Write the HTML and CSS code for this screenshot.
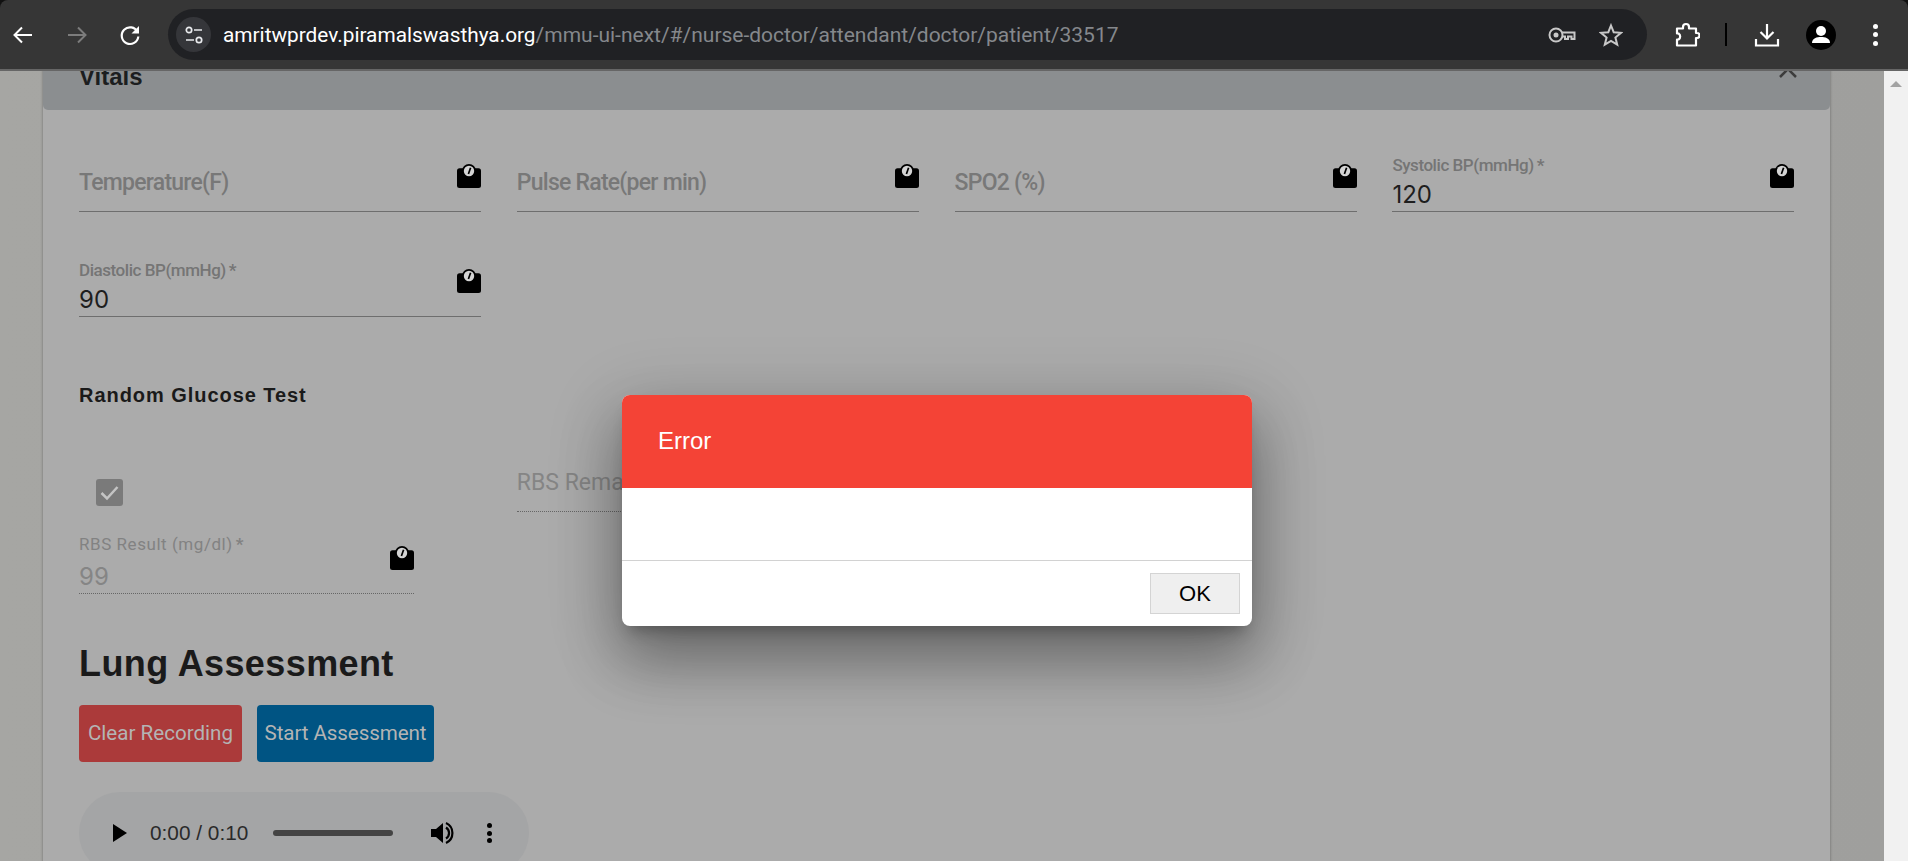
FILE: index.html
```html
<!doctype html>
<html lang="en">
<head>
  <meta charset="utf-8">
  <title>Vitals</title>
  <link rel="stylesheet" href="styles.css">
</head>

<body>

<svg class="defs" width="0" height="0">
  <symbol id="scale" viewBox="0 0 24 24">
    <circle cx="12" cy="7" r="7" fill="#000"/>
    <path d="M2.500 4.200H21.500Q24 4.200 24 6.700V21.500Q24 24 21.500 24H2.500Q0 24 0 21.500V6.700Q0 4.200 2.500 4.200Z" fill="#000"/>
    <circle cx="12" cy="7" r="5.200" fill="#d4d4d4"/>
    <path d="M13.600 3.800L11.400 10" stroke="#000" stroke-width="1.700"/>
  </symbol>
</svg>

<div id="toolbar">
  <div class="nav">
    <svg class="tool-icon" viewBox="0 0 30 30"><path d="M24 15H7M14 7.500L6.500 15L14 22.500" fill="none" stroke="#fff" stroke-width="2"/></svg>
    <svg class="tool-icon" viewBox="0 0 30 30"><path d="M6 15H23M16 7.500L23.500 15L16 22.500" fill="none" stroke="#7c7c7c" stroke-width="2"/></svg>
    <svg class="tool-icon" viewBox="0 0 30 30"><path d="M22.500 12A8.300 8.300 0 1 0 23.300 16.500" fill="none" stroke="#fff" stroke-width="2.200"/><path d="M24 6V13.500H16.500Z" fill="#fff"/></svg>
  </div>

  <div id="omnibox">
    <div class="site-icon">
      <svg width="20" height="20" viewBox="0 0 20 20"><g fill="none" stroke="#e8eaed" stroke-width="1.700"><circle cx="5" cy="5" r="2.700"/><circle cx="15" cy="15" r="2.700"/><path d="M10 5H18M2 15H10"/></g></svg>
    </div>
    <span class="url"><span class="host">amritwprdev.piramalswasthya.org</span>/mmu-ui-next/#/nurse-doctor/attendant/doctor/patient/33517</span>
    <svg class="key-icon" width="28" height="16" viewBox="0 0 28 16"><g fill="none" stroke="#c8c8c8" stroke-width="2"><circle cx="8" cy="8" r="6.500"/><path d="M14 5.500H26.500V12H23.500V9.500H20V12H17V9.500H14"/></g><circle cx="8" cy="8" r="2.500" fill="#c8c8c8"/></svg>
    <svg class="star-icon" width="24" height="24" viewBox="0 0 24 24"><path d="M12 2.500L14.700 9.200L22 9.800L16.400 14.500L18.200 21.600L12 17.800L5.800 21.600L7.600 14.500L2 9.800L9.300 9.200Z" fill="none" stroke="#c8c8c8" stroke-width="2"/></svg>
  </div>

  <svg class="ext-icon" width="26" height="26" viewBox="0 0 26 26"><path d="M3 6.500H9V5A3 3 0 0 1 15 5V6.500H22V11H23A2.500 2.500 0 0 1 23 16H22V23.500H3V17.500H4.500A3.500 3.500 0 0 0 4.500 11.500H3Z" fill="none" stroke="#fff" stroke-width="2.200" stroke-linejoin="round"/></svg>
  <div class="sep"></div>
  <svg class="dl-icon" width="26" height="26" viewBox="0 0 26 26"><path d="M13 2V16M6.500 10L13 16.500L19.500 10M2 17V23.500H24V17" fill="none" stroke="#fff" stroke-width="2.200"/></svg>
  <div class="avatar">
    <svg width="30" height="30" viewBox="0 0 30 30"><circle cx="15" cy="11" r="5" fill="#fff"/><path d="M6 23C6 18 11 17 15 17S24 18 24 23Z" fill="#fff"/></svg>
  </div>
  <div class="menu"><i></i><i></i><i></i></div>
</div>
<div id="toolbar-line"></div>

<div id="viewport">
  <div id="page">
    <div id="card">

      <div class="card-head">
        <h2>Vitals</h2>
        <svg class="chevron" width="20" height="12" viewBox="0 0 20 12"><path d="M2 11L10 3L18 11" fill="none" stroke="#3c3c3c" stroke-width="2.500"/></svg>
      </div>

      <div class="card-body">

        <div class="fields">
          <div class="field">
            <div class="field-text"><span class="placeholder">Temperature(F)</span></div>
            <svg class="scale"><use href="#scale"/></svg>
          </div>
          <div class="field">
            <div class="field-text"><span class="placeholder">Pulse Rate(per min)</span></div>
            <svg class="scale"><use href="#scale"/></svg>
          </div>
          <div class="field">
            <div class="field-text"><span class="placeholder">SPO2 (%)</span></div>
            <svg class="scale"><use href="#scale"/></svg>
          </div>
          <div class="field">
            <div class="field-text"><span class="float-label">Systolic BP(mmHg)<b>*</b></span><span class="value">120</span></div>
            <svg class="scale"><use href="#scale"/></svg>
          </div>
          <div class="field">
            <div class="field-text"><span class="float-label">Diastolic BP(mmHg)<b>*</b></span><span class="value">90</span></div>
            <svg class="scale"><use href="#scale"/></svg>
          </div>
        </div>

        <h3 class="glucose-title">Random Glucose Test</h3>

        <div class="fields rbs-row">
          <div class="check-cell">
            <div class="checkbox">
              <svg width="27" height="27" viewBox="0 0 27 27"><path d="M5.500 14L11 19.500L21.500 8" fill="none" stroke="#c4c4c4" stroke-width="2.500"/></svg>
            </div>
          </div>
          <div class="field disabled">
            <div class="field-text"><span class="placeholder">RBS Remarks</span></div>
          </div>
        </div>

        <div class="field disabled rbs-result">
          <div class="field-text"><span class="float-label">RBS Result (mg/dl)<b>*</b></span><span class="value">99</span></div>
          <svg class="scale"><use href="#scale"/></svg>
        </div>

        <h1 class="lung-title">Lung Assessment</h1>

        <div class="actions">
          <div class="btn btn-red">Clear Recording</div>
          <div class="btn btn-blue">Start Assessment</div>
        </div>

        <div class="audio">
          <svg class="audio-play" width="14" height="18" viewBox="0 0 14 18"><path d="M0 0L14 9L0 18Z" fill="#000"/></svg>
          <span class="audio-time">0:00 / 0:10</span>
          <div class="audio-track"></div>
          <svg class="audio-vol" width="24" height="24" viewBox="0 0 24 24"><path d="M0 8H5L12 2V22L5 16H0Z" fill="#000"/><path d="M15 6.500A6.500 6.500 0 0 1 15 17.500M15 2A11 11 0 0 1 15 22" fill="none" stroke="#000" stroke-width="2.200"/></svg>
          <div class="audio-menu"><i></i><i></i><i></i></div>
        </div>

      </div>
    </div>
  </div>

  <div id="scrollbar"><div class="arrow-up"></div></div>

  <div id="dialog">
    <div class="dialog-head">Error</div>
    <div class="dialog-body"></div>
    <div class="dialog-foot"><div class="ok-btn">OK</div></div>
  </div>
</div>

</body>
</html>
```

FILE: styles.css
```css
html {
  box-sizing: border-box;
}
*, *:before, *:after {
  box-sizing: inherit;
}

body {
  margin: 0;
  height: 861px;
  overflow: hidden;
  display: flex;
  flex-direction: column;
  background-color: #111;
  font-family: 'Roboto', sans-serif;
}

.defs {
  position: absolute;
}

/* browser bar */

#toolbar {
  height: 69px;
  flex: none;
  display: flex;
  align-items: center;
  background-color: #363636;
  border-radius: 8px 8px 0 0;
}

#toolbar-line {
  height: 2px;
  flex: none;
  background-color: #666;
}

.nav {
  display: flex;
  gap: 23.5px;
  padding-left: 8px;
}

.tool-icon {
  width: 30px;
  height: 30px;
  display: block;
}

#omnibox {
  width: 1479px;
  height: 51px;
  margin-left: 23px;
  padding-left: 8px;
  display: flex;
  align-items: center;
  background-color: #202124;
  border-radius: 26px;
}

.site-icon {
  width: 35px;
  height: 35px;
  flex: none;
  display: flex;
  align-items: center;
  justify-content: center;
  background-color: #35363a;
  border-radius: 50%;
}

.url {
  margin-left: 12px;
  font-size: 21px;
  color: #85888c;
  white-space: nowrap;
}

.host {
  font-size: 20.8px;
  color: #fff;
}

.key-icon {
  margin-left: auto;
  flex: none;
}

.star-icon {
  margin-left: 23px;
  margin-right: 24px;
  flex: none;
}

.ext-icon {
  margin-left: 27px;
  flex: none;
}

.sep {
  width: 2px;
  height: 23px;
  margin-left: 25px;
  background-color: #000;
}

.dl-icon {
  margin-left: 27px;
  flex: none;
}

.avatar {
  width: 30px;
  height: 30px;
  margin-left: 26px;
  background-color: #000;
  border-radius: 50%;
  overflow: hidden;
}

.avatar svg {
  display: block;
}

.menu {
  margin-left: 37px;
  display: flex;
  flex-direction: column;
  gap: 3.500px;
}

.menu i {
  width: 5px;
  height: 5px;
  display: block;
  background-color: #fff;
  border-radius: 50%;
}

/* page, already dimmed by the dialog backdrop */

#viewport {
  flex: 1;
  min-height: 0;
  display: flex;
  position: relative;
}

#page {
  flex: 1;
  min-width: 0;
  overflow: hidden;
  padding: 0 54px 0 43px;
  background: linear-gradient(90deg, #a6a6a3, #9f9f9d);
}

#scrollbar {
  width: 24px;
  flex: none;
  padding-top: 10px;
  background-color: #f1f1f1;
}

.arrow-up {
  width: 0;
  height: 0;
  margin: 0 auto;
  border-left: 6px solid transparent;
  border-right: 6px solid transparent;
  border-bottom: 6px solid #a3a3a3;
}

#card {
  margin-top: -27px;
  background-color: #ababab;
  box-shadow: 0 0 3px rgba(0, 0, 0, 0.35);
  border-radius: 0 0 5px 5px;
}

.card-head {
  height: 66px;
  padding: 0 32px 0 36px;
  display: flex;
  align-items: center;
  justify-content: space-between;
  background-color: #8b8e90;
  border-radius: 0 0 5px 5px;
}

.card-head h2 {
  margin: 0;
  font-family: 'Liberation Sans', sans-serif;
  font-size: 24px;
  font-weight: 700;
  color: #1c1e20;
}

.chevron {
  margin-bottom: 11px;
}

.card-body {
  padding: 45px 36px 0 36px;
}

.fields {
  display: grid;
  grid-template-columns: repeat(4, 402px);
  column-gap: 35.8px;
  row-gap: 48px;
}

.field {
  height: 57px;
  display: flex;
  border-bottom: 1px solid #6e6e6e;
}

.field.disabled {
  border-bottom: 1px dotted #666;
}

.field-text {
  flex: 1;
  min-width: 0;
  display: flex;
  flex-direction: column;
  justify-content: space-between;
}

.placeholder {
  margin-top: auto;
  padding-bottom: 13px;
  font-size: 23px;
  font-weight: 500;
  line-height: 30px;
  letter-spacing: -0.75px;
  color: #787878;
}

.disabled .placeholder {
  font-weight: 400;
  letter-spacing: 0;
  color: #858585;
}

.float-label {
  font-size: 17px;
  font-weight: 500;
  line-height: 20px;
  letter-spacing: -0.45px;
  color: #757575;
}

.float-label b {
  margin-left: 3px;
  font-weight: 700;
}

.disabled .float-label {
  margin-top: -3px;
  font-size: 17px;
  font-weight: 400;
  letter-spacing: 0.55px;
  color: #828282;
}

.value {
  height: 32px;
  font-family: 'Inter', sans-serif;
  font-size: 24px;
  line-height: 32px;
  color: #1e1e1e;
}

.disabled .value {
  color: #858585;
}

.scale {
  width: 24px;
  height: 24px;
  flex: none;
  margin-top: 9px;
}

.glucose-title {
  margin: 66px 0 0 0;
  font-family: 'Liberation Sans', sans-serif;
  font-size: 20px;
  font-weight: 700;
  line-height: 24px;
  letter-spacing: 0.95px;
  color: #1a1a1a;
}

.rbs-row {
  margin-top: 48px;
}

.check-cell {
  padding: 24px 0 0 17px;
}

.checkbox {
  width: 27px;
  height: 27px;
  background-color: #7a7a7a;
  border-radius: 3px;
}

.checkbox svg {
  display: block;
}

.rbs-result {
  width: 335px;
  margin-top: 25px;
}

.lung-title {
  margin: 48px 0 0 0;
  font-family: 'Liberation Sans', sans-serif;
  font-size: 36px;
  font-weight: 700;
  line-height: 44px;
  letter-spacing: 0.4px;
  color: #1a1a1a;
}

.actions {
  margin-top: 19px;
  display: flex;
  gap: 15px;
}

.btn {
  height: 57px;
  padding-bottom: 1px;
  display: flex;
  align-items: center;
  justify-content: center;
  font-size: 20.6px;
  color: #b4b4b4;
  border-radius: 4px;
}

.btn-red {
  width: 163px;
  background-color: #ab3a3a;
}

.btn-blue {
  width: 177px;
  letter-spacing: -0.1px;
  background-color: #005483;
}

.audio {
  width: 450px;
  height: 82px;
  margin-top: 30px;
  padding-left: 34px;
  display: flex;
  align-items: center;
  background-color: #a4a5a6;
  border-radius: 41px;
}

.audio-play {
  flex: none;
}

.audio-time {
  width: 98px;
  margin-left: 23px;
  font-family: 'Liberation Sans', sans-serif;
  font-size: 20.8px;
  color: #2a2a2a;
  white-space: nowrap;
}

.audio-track {
  width: 120px;
  height: 6px;
  margin-left: 25px;
  background-color: #444;
  border-radius: 3px;
}

.audio-vol {
  margin-left: 38px;
  flex: none;
}

.audio-menu {
  margin-left: 32px;
  display: flex;
  flex-direction: column;
  gap: 2.500px;
}

.audio-menu i {
  width: 5px;
  height: 5px;
  display: block;
  background-color: #000;
  border-radius: 50%;
}

/* dialog */

#dialog {
  position: absolute;
  left: 622px;
  top: 324px;
  width: 630px;
  height: 231px;
  display: flex;
  flex-direction: column;
  background-color: #fff;
  border-radius: 8px;
  box-shadow: 0 11px 15px -7px rgba(0, 0, 0, 0.28), 0 34px 60px 2px rgba(0, 0, 0, 0.3), 0 16px 70px 10px rgba(0, 0, 0, 0.14);
}

.dialog-head {
  height: 93px;
  padding: 0 0 2px 36px;
  display: flex;
  align-items: center;
  font-family: 'Liberation Sans', sans-serif;
  font-size: 24px;
  color: #fff;
  background-color: #f44336;
  border-radius: 8px 8px 0 0;
}

.dialog-body {
  height: 72px;
}

.dialog-foot {
  flex: 1;
  padding: 12px 12px 0 0;
  display: flex;
  justify-content: flex-end;
  border-top: 1px solid #d2d2d2;
}

.ok-btn {
  width: 90px;
  height: 41px;
  display: flex;
  align-items: center;
  justify-content: center;
  font-family: 'Liberation Sans', sans-serif;
  font-size: 22px;
  color: #000;
  background-color: #efefef;
  border: 1px solid #d4d4d4;
}
```
